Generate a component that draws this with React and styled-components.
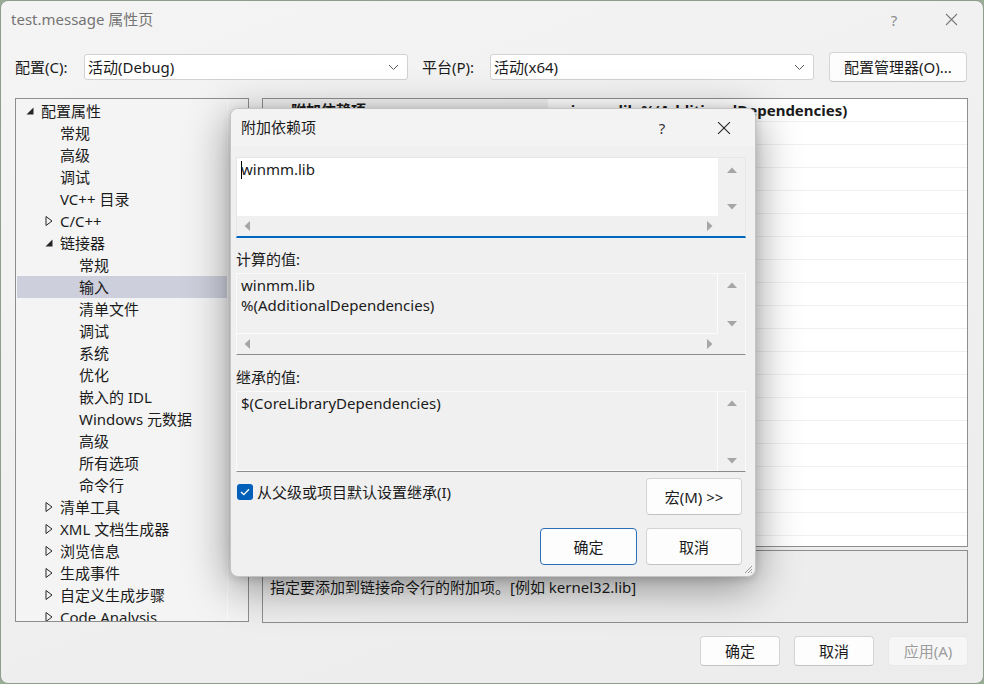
import React from "react";
import styled, { createGlobalStyle } from "styled-components";

const FONT = `"Noto Sans", "Noto Sans CJK SC", sans-serif`;

const GlobalStyle = createGlobalStyle`
  html, body {
    margin: 0;
    padding: 0;
    background: #9aab98;
  }
  body {
    font-family: ${FONT};
    font-size: 15px;
    color: #1b1b1b;
  }
  * { box-sizing: border-box; }
`;

const Window = styled.div`
  position: relative;
  width: 984px;
  height: 684px;
  border: 1px solid #8d9f8b;
  border-radius: 8px;
  background: linear-gradient(160deg, #f4f4f4 0%, #efefef 60%, #ececec 100%);
  display: flex;
  flex-direction: column;
  overflow: hidden;
`;

const TitleBar = styled.div`
  height: 37px;
  display: flex;
  align-items: center;
  padding-left: 10px;
`;

const Title = styled.div`
  flex: 1;
  color: #747474;
  font-size: 15px;
  line-height: 20px;
  margin-top: -2px;
`;

const CaptionBtn = styled.div`
  width: 46px;
  height: 37px;
  display: flex;
  align-items: center;
  justify-content: center;
  color: ${(p) => p.$color || "#8a8a8a"};
  font-size: 15px;
  margin-right: ${(p) => p.$mr || 0}px;
`;

const Toolbar = styled.div`
  display: flex;
  align-items: center;
  height: 30px;
  margin-top: 14px;
  padding-left: 14px;
`;

const FieldLabel = styled.div`
  width: ${(p) => p.$w}px;
  line-height: 20px;
`;

const Combo = styled.div`
  width: 324px;
  height: 26px;
  background: #ffffff;
  border: 1px solid #d2d2d2;
  border-radius: 3px;
  display: flex;
  align-items: center;
  padding: 0 8px 0 3px;
  margin-right: ${(p) => p.$mr}px;
  span { flex: 1; line-height: 20px; }
`;

const Button = styled.div`
  width: ${(p) => p.$w}px;
  height: ${(p) => p.$h || 30}px;
  display: flex;
  align-items: center;
  justify-content: center;
  background: ${(p) => (p.$disabled ? "#f6f6f6" : "#fdfdfd")};
  border: 1px solid ${(p) => (p.$primary ? "#2a6fb8" : p.$disabled ? "#e8e8e8" : "#d4d4d4")};
  border-bottom-color: ${(p) => (p.$primary ? "#2a6fb8" : p.$disabled ? "#e8e8e8" : "#c2c2c2")};
  border-radius: 4px;
  color: ${(p) => (p.$disabled ? "#9d9d9d" : "#1b1b1b")};
  line-height: 20px;
`;

const Body = styled.div`
  display: flex;
  gap: 13px;
  margin-top: 16px;
  padding: 0 15px 0 14px;
  height: 525px;
`;

const TreePanel = styled.div`
  width: 234px;
  height: 524px;
  border: 1px solid #8e8e8e;
  background: #f4f4f4;
  display: flex;
  overflow: hidden;
`;

const TreeList = styled.div`
  flex: 1;
  padding-top: 1px;
`;

const TreeTrack = styled.div`
  width: 21px;
  border-left: 1px solid #fbfbfb;
`;

const TreeRow = styled.div`
  height: 22px;
  display: flex;
  align-items: center;
  margin-left: 1px;
  padding-left: ${(p) => 5 + p.$level * 19}px;
  background: ${(p) => (p.$selected ? "#cdcfdc" : "transparent")};
  line-height: 20px;
  white-space: nowrap;
`;

const Arrow = styled.span`
  width: 19px;
  height: 22px;
  display: flex;
  align-items: center;
  justify-content: flex-start;
  padding-left: 4px;
`;

const RightCol = styled.div`
  flex: 1;
  display: flex;
  flex-direction: column;
  gap: 3px;
`;

const Grid = styled.div`
  height: 449px;
  border: 1px solid #8e8e8e;
  background: #ffffff;
  overflow: hidden;
`;

const GridRow = styled.div`
  height: 23px;
  display: flex;
  border-bottom: 1px solid #eef0f4;
  font-weight: ${(p) => (p.$bold ? 700 : 400)};
`;

const NameCell = styled.div`
  width: 285px;
  padding-left: 28px;
  background: ${(p) => (p.$shade ? "#f1f1f1" : "transparent")};
  line-height: 22px;
`;

const ValueCell = styled.div`
  flex: 1;
  padding-left: 10px;
  line-height: 22px;
  white-space: nowrap;
`;

const Description = styled.div`
  height: 73px;
  border: 1px solid #8e8e8e;
  padding: 3px 7px;
  line-height: 22px;
  b { display: block; }
`;

const Footer = styled.div`
  display: flex;
  justify-content: flex-end;
  gap: 14px;
  margin-top: 13px;
  padding-right: 15px;
`;

/* ---------- dialog ---------- */

const Dialog = styled.div`
  position: absolute;
  left: 229px;
  top: 107px;
  width: 526px;
  height: 469px;
  background: #f0f0f0;
  border: 1px solid #c4c4c4;
  border-radius: 8px;
  box-shadow: 0 10px 44px rgba(0, 0, 0, 0.42), 0 2px 8px rgba(0, 0, 0, 0.15);
  display: flex;
  flex-direction: column;
  overflow: hidden;
`;

const DialogHead = styled.div`
  height: 38px;
  display: flex;
  align-items: center;
  padding-left: 10px;
  background: #f3f3f3;
`;

const DialogTitle = styled.div`
  flex: 1;
  line-height: 20px;
  margin-top: -2px;
`;

const DialogBody = styled.div`
  padding: 10px 9px 0 5px;
  display: flex;
  flex-direction: column;
  position: relative;
  flex: 1;
`;

const TextBox = styled.div`
  height: ${(p) => p.$h}px;
  display: grid;
  grid-template-columns: 1fr 27px;
  grid-template-rows: ${(p) => (p.$hbar ? "1fr 20px" : "1fr")};
  background: #f0f0f0;
  border: 1px solid ${(p) => (p.$edit ? "#e6e6e6" : "#fafafa")};
  border-bottom: ${(p) => (p.$edit ? "2px solid #0067c0" : "1px solid #8b8b8b")};
`;

const TextArea = styled.div`
  background: ${(p) => (p.$edit ? "#ffffff" : "#f0f0f0")};
  border-right: 1px solid ${(p) => (p.$edit ? "#ffffff" : "#fbfbfb")};
  border-bottom: 1px solid ${(p) => (p.$edit ? "#ffffff" : "#fbfbfb")};
  padding: 1px 4px;
  line-height: 20px;
  white-space: pre;
`;

const VBar = styled.div`
  display: flex;
  flex-direction: column;
  justify-content: space-between;
  align-items: center;
  padding: ${(p) => p.$pad};
`;

const HBar = styled.div`
  display: flex;
  justify-content: space-between;
  align-items: center;
  padding: 0 3px 0 5px;
`;

const Caret = styled.span`
  display: inline-block;
  width: 1px;
  height: 18px;
  background: #000;
  vertical-align: -4px;
  margin-right: -1px;
`;

const BoxLabel = styled.div`
  line-height: 22px;
  margin: ${(p) => p.$mt}px 0 3px;
`;

const DialogFoot = styled.div`
  display: grid;
  grid-template-columns: 1fr 97px 96px;
  column-gap: 9px;
  row-gap: 13px;
  margin-top: 6px;
  padding-right: 4px;
`;

const CheckRow = styled.label`
  grid-column: 1 / 3;
  display: flex;
  align-items: center;
  gap: 4px;
  padding-left: 1px;
  height: 28px;
  line-height: 20px;
`;

const CheckBox = styled.span`
  width: 16px;
  height: 16px;
  border-radius: 3px;
  background: #005fb8;
  display: flex;
  align-items: center;
  justify-content: center;
`;

const Grip = styled.svg`
  position: absolute;
  right: 2px;
  bottom: 2px;
`;

/* ---------- icons ---------- */

const OpenTri = () => (
  <svg width="8" height="8" viewBox="0 0 8 8">
    <polygon points="7.5,0.5 7.5,7.5 0.5,7.5" fill="#262626" />
  </svg>
);

const ClosedTri = () => (
  <svg width="8" height="12" viewBox="0 0 8 12">
    <polygon points="1,1.5 7,6 1,10.5" fill="none" stroke="#262626" strokeWidth="1" />
  </svg>
);

const Chevron = () => (
  <svg width="11" height="7" viewBox="0 0 11 7">
    <polyline points="1,1 5.5,5.5 10,1" fill="none" stroke="#5c5c5c" strokeWidth="1" />
  </svg>
);

const CloseX = ({ size = 13, color = "#333" }) => (
  <svg width={size} height={size} viewBox="0 0 13 13">
    <path d="M1 1 L12 12 M12 1 L1 12" stroke={color} strokeWidth="1.1" />
  </svg>
);

const Tri = ({ dir }) => {
  const pts = {
    up: "0,8 5,2.5 10,8",
    down: "0,2 5,7.5 10,2",
    left: "8,0 2.5,5 8,10",
    right: "2,0 7.5,5 2,10",
  }[dir];
  return (
    <svg width="10" height="10" viewBox="0 0 10 10">
      <polygon points={pts} fill="#a6a6a6" />
    </svg>
  );
};

const Check = () => (
  <svg width="10" height="8" viewBox="0 0 10 8">
    <polyline points="1,4 3.8,6.6 9,1.2" fill="none" stroke="#fff" strokeWidth="1.3" />
  </svg>
);

/* ---------- data ---------- */

const tree = [
  { l: 0, t: "配置属性", a: "open" },
  { l: 1, t: "常规" },
  { l: 1, t: "高级" },
  { l: 1, t: "调试" },
  { l: 1, t: "VC++ 目录" },
  { l: 1, t: "C/C++", a: "closed" },
  { l: 1, t: "链接器", a: "open" },
  { l: 2, t: "常规" },
  { l: 2, t: "输入", sel: true },
  { l: 2, t: "清单文件" },
  { l: 2, t: "调试" },
  { l: 2, t: "系统" },
  { l: 2, t: "优化" },
  { l: 2, t: "嵌入的 IDL" },
  { l: 2, t: "Windows 元数据" },
  { l: 2, t: "高级" },
  { l: 2, t: "所有选项" },
  { l: 2, t: "命令行" },
  { l: 1, t: "清单工具", a: "closed" },
  { l: 1, t: "XML 文档生成器", a: "closed" },
  { l: 1, t: "浏览信息", a: "closed" },
  { l: 1, t: "生成事件", a: "closed" },
  { l: 1, t: "自定义生成步骤", a: "closed" },
  { l: 1, t: "Code Analysis", a: "closed" },
];

const gridRows = Array.from({ length: 19 }, (_, i) => i);

function TreeItem({ item }) {
  return (
    <TreeRow $level={item.l} $selected={item.sel}>
      <Arrow>{item.a === "open" ? <OpenTri /> : item.a === "closed" ? <ClosedTri /> : null}</Arrow>
      <span>{item.t}</span>
    </TreeRow>
  );
}

function DepsDialog() {
  return (
    <Dialog>
      <DialogHead>
        <DialogTitle>附加依赖项</DialogTitle>
        <CaptionBtn $color="#333" $mr={16}>?</CaptionBtn>
        <CaptionBtn $mr={8}>
          <CloseX size={14} color="#2b2b2b" />
        </CaptionBtn>
      </DialogHead>
      <DialogBody>
        <TextBox $h={81} $edit $hbar>
          <TextArea $edit>
            <Caret />
            winmm.lib
          </TextArea>
          <VBar $pad="7px 0 4px">
            <Tri dir="up" />
            <Tri dir="down" />
          </VBar>
          <HBar>
            <Tri dir="left" />
            <Tri dir="right" />
          </HBar>
          <div />
        </TextBox>

        <BoxLabel $mt={10}>计算的值:</BoxLabel>
        <TextBox $h={82} $hbar>
          <TextArea>{"winmm.lib\n%(AdditionalDependencies)"}</TextArea>
          <VBar $pad="6px 0 5px">
            <Tri dir="up" />
            <Tri dir="down" />
          </VBar>
          <HBar>
            <Tri dir="left" />
            <Tri dir="right" />
          </HBar>
          <div />
        </TextBox>

        <BoxLabel $mt={11}>继承的值:</BoxLabel>
        <TextBox $h={81}>
          <TextArea>$(CoreLibraryDependencies)</TextArea>
          <VBar $pad="6px 0 5px">
            <Tri dir="up" />
            <Tri dir="down" />
          </VBar>
        </TextBox>

        <DialogFoot>
          <CheckRow>
            <CheckBox>
              <Check />
            </CheckBox>
            从父级或项目默认设置继承(I)
          </CheckRow>
          <Button $w={96} $h={37}>宏(M) &gt;&gt;</Button>
          <div />
          <Button $w={97} $h={37} $primary>确定</Button>
          <Button $w={96} $h={37}>取消</Button>
        </DialogFoot>
      </DialogBody>
      <Grip width="9" height="9" viewBox="0 0 9 9">
        <path d="M8 1 L1 8 M8 4 L4 8 M8 7 L7 8" stroke="#9a9a9a" strokeWidth="1" />
      </Grip>
    </Dialog>
  );
}

export default function App() {
  return (
    <>
      <GlobalStyle />
      <Window>
        <TitleBar>
          <Title>test.message 属性页</Title>
          <CaptionBtn $mr={11}>?</CaptionBtn>
          <CaptionBtn $mr={9}>
            <CloseX color="#7a7a7a" />
          </CaptionBtn>
        </TitleBar>

        <Toolbar>
          <FieldLabel $w={69}>配置(C):</FieldLabel>
          <Combo $mr={14}>
            <span>活动(Debug)</span>
            <Chevron />
          </Combo>
          <FieldLabel $w={68}>平台(P):</FieldLabel>
          <Combo $mr={15}>
            <span>活动(x64)</span>
            <Chevron />
          </Combo>
          <Button $w={138}>配置管理器(O)...</Button>
        </Toolbar>

        <Body>
          <TreePanel>
            <TreeList>
              {tree.map((item, i) => (
                <TreeItem key={i} item={item} />
              ))}
            </TreeList>
            <TreeTrack />
          </TreePanel>
          <RightCol>
            <Grid>
              <GridRow $bold>
                <NameCell $shade>附加依赖项</NameCell>
                <ValueCell>winmm.lib;%(AdditionalDependencies)</ValueCell>
              </GridRow>
              {gridRows.map((i) => (
                <GridRow key={i}>
                  <NameCell />
                  <ValueCell />
                </GridRow>
              ))}
            </Grid>
            <Description>
              <b>附加依赖项</b>
              指定要添加到链接命令行的附加项。[例如 kernel32.lib]
            </Description>
          </RightCol>
        </Body>

        <Footer>
          <Button $w={80}>确定</Button>
          <Button $w={80}>取消</Button>
          <Button $w={80} $disabled>应用(A)</Button>
        </Footer>

        <DepsDialog />
      </Window>
    </>
  );
}
